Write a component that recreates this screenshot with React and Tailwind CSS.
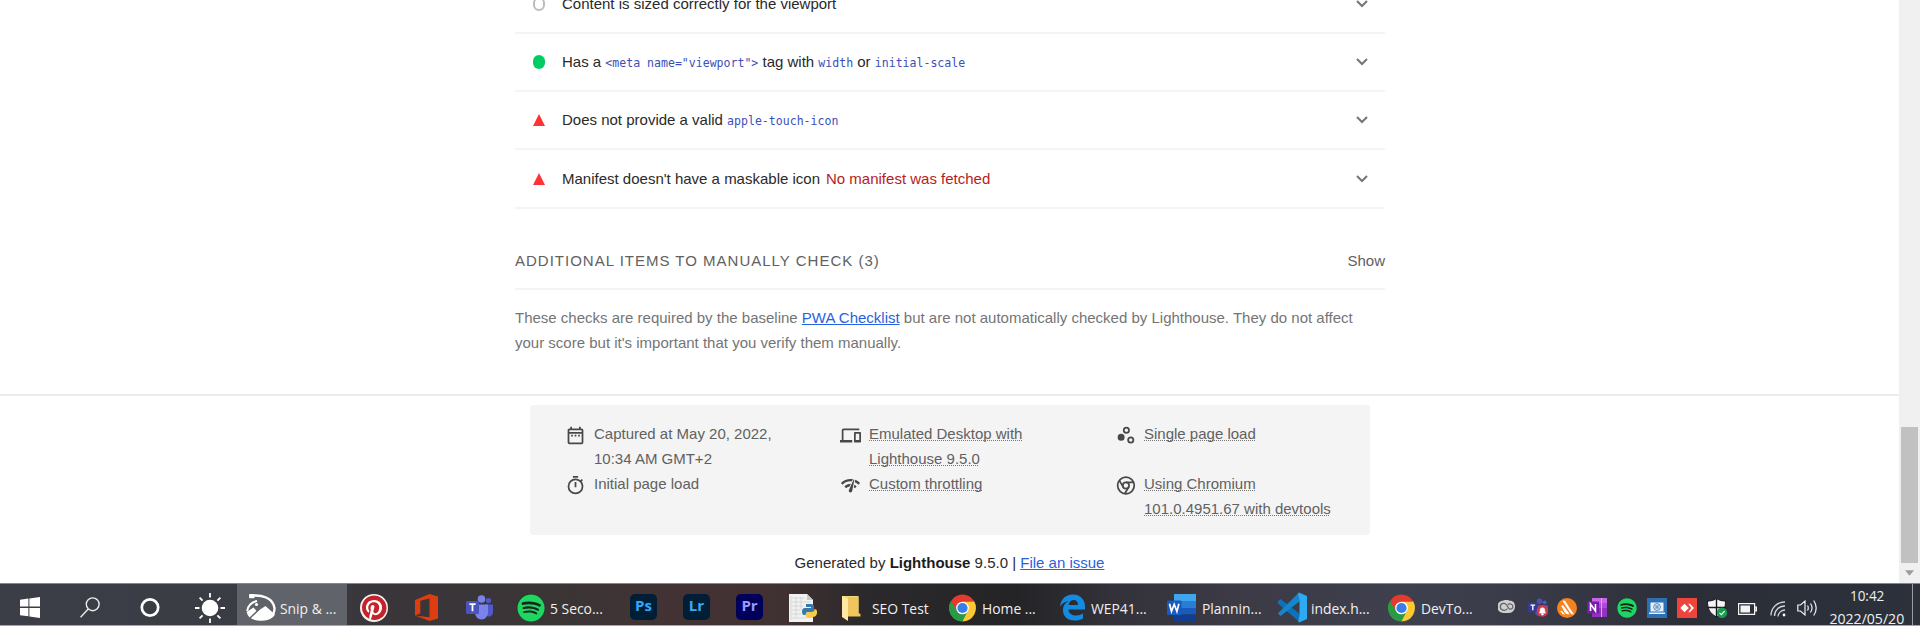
import React from "react";
import { FaPinterest, FaSpotify } from "react-icons/fa";

/* ---------- Report icons ---------- */

const META_PATHS = {
  date: "M7 11h2v2H7v-2zm14-5v14a2 2 0 01-2 2H5a2 2 0 01-2-2V6c0-1.1.9-2 2-2h1V2h2v2h8V2h2v2h1a2 2 0 012 2zM5 8h14V6H5v2zm14 12V10H5v10h14zm-4-7h2v-2h-2v2zm-4 0h2v-2h-2v2z",
  devices: "M4 6h18V4H4a2 2 0 00-2 2v11H0v3h14v-3H4V6zm19 2h-6a1 1 0 00-1 1v10c0 .6.5 1 1 1h6c.6 0 1-.5 1-1V9c0-.6-.5-1-1-1zm-1 9h-4v-7h4v7z",
  samples: "M7 18a4 4 0 110-8 4 4 0 010 8zm11 3a4 4 0 110-8 4 4 0 010 8zm0-6a2 2 0 100 4 2 2 0 000-4zm-5-5a4 4 0 110-8 4 4 0 010 8zm0-6a2 2 0 100 4 2 2 0 000-4z",
  stopwatch: "M15 1H9v2h6V1zm-4 13h2V8h-2v6zm8.03-6.61l1.42-1.42a11 11 0 00-1.41-1.41l-1.42 1.42A9 9 0 0012 4a9 9 0 109 9c0-2.12-.74-4.07-1.97-5.61zM12 20a7 7 0 110-14 7 7 0 010 14z",
  network: "M15.9 5c-.17 0-.32.09-.41.23l-.07.15-5.18 11.65c-.16.29-.26.61-.26.96 0 1.11.9 2.01 2.01 2.01.96 0 1.77-.68 1.96-1.59l.01-.03L16.4 5.5c0-.28-.22-.5-.5-.5zM1 9l2 2c2.88-2.88 6.79-4.08 10.53-3.62l1.19-2.68C9.89 3.84 4.74 5.27 1 9zm20 2l2-2c-1.64-1.64-3.55-2.82-5.59-3.57l-.53 2.82c1.5.62 2.9 1.53 4.12 2.75zm-4 4l2-2c-.8-.8-1.7-1.42-2.66-1.89l-.55 2.92c.42.27.83.59 1.21.97zM5 13l2 2c1.13-1.13 2.56-1.79 4.03-2l1.28-2.88c-2.63-.08-5.3.87-7.31 2.88z",
};

function MetaIcon({ name }) {
  return (
    <svg viewBox="0 0 24 24" className="mt-[4px] h-[21px] w-[21px] shrink-0 fill-[#484848]">
      {name === "chrome" ? (
        <g fill="none" stroke="#484848" strokeWidth="2">
          <circle cx="12.5" cy="12" r="9.5" />
          <circle cx="12.5" cy="12" r="3.6" />
          <path d="M12.5 8.4h9M9.4 13.8L4.9 6.2M15.6 13.8l-4.5 7.6" />
        </g>
      ) : (
        <path d={META_PATHS[name]} />
      )}
    </svg>
  );
}

function Chevron() {
  return (
    <svg viewBox="0 0 12 8" className="mr-[17px] h-[8px] w-[12px]" preserveAspectRatio="none">
      <path d="M1 1l5 5 5-5" fill="none" stroke="#757575" strokeWidth="2" />
    </svg>
  );
}

function Status({ kind }) {
  if (kind === "none") return <span className="h-[14px] w-[12px] rounded-full border-2 border-[#bdbdbd]" />;
  if (kind === "pass") return <span className="h-[14px] w-[12px] rounded-full bg-[#0c6]" />;
  return (
    <svg viewBox="0 0 12 12" preserveAspectRatio="none" className="h-[12px] w-[12px]">
      <path d="M6 0l6 12H0z" fill="#f33" />
    </svg>
  );
}

function Code({ children }) {
  return <code className="font-['DejaVu_Sans_Mono',monospace] text-[11.55px] text-[#3a50b8]">{children}</code>;
}

function AuditRow({ kind, className, children }) {
  return (
    <div className={"flex shrink-0 items-center border-b-2 border-[#f4f4f4] pl-[18px] text-[#2a2a2a] " + className}>
      <Status kind={kind} />
      <div className="ml-[17px] flex-1 whitespace-nowrap">{children}</div>
      <Chevron />
    </div>
  );
}

function Meta({ icon, plain, children }) {
  return (
    <div className="flex h-[50px] items-start">
      <MetaIcon name={icon} />
      <p className="ml-[8px] whitespace-nowrap">
        <span className={plain ? "" : "underline decoration-[#777] decoration-dotted decoration-1 underline-offset-1 [text-decoration-skip-ink:none]"}>{children}</span>
      </p>
    </div>
  );
}

/* ---------- Taskbar ---------- */

function Label({ className, children }) {
  return (
    <span className={"block whitespace-nowrap text-[15px] leading-5 text-[#f0f0f0] " + className}>
      <span className="inline-block origin-left scale-x-[0.925]">{children}</span>
    </span>
  );
}

function Adobe({ text, className }) {
  return (
    <span className={"flex h-[26px] w-[27px] items-center justify-center rounded-[5px] pb-[2px] text-[15px] font-bold leading-none " + className}>
      {text}
    </span>
  );
}

function Chrome({ className }) {
  return (
    <svg viewBox="0 0 28 28" className={"h-[28px] w-[27px] " + className}>
      <path d="M14 14L1.9 7A14 14 0 0126.1 7z" fill="#e33b2e" />
      <path d="M14 14L26.1 7A14 14 0 0114 28z" fill="#fcc934" />
      <path d="M14 14v14A14 14 0 011.9 7z" fill="#2c9a45" />
      <path d="M14 7.6h12.4L20 17.2z" fill="#fcc934" />
      <path d="M1.9 7l6.6 10.2L14 7.6z" fill="#e33b2e" />
      <path d="M1.9 7l6.5 10.3 5.6 3.1 5.5-3.2L14 28A14 14 0 011.9 7z" fill="#2c9a45" />
      <circle cx="14" cy="14" r="6.6" fill="#fff" />
      <circle cx="14" cy="14" r="5.3" fill="#3b7de8" />
    </svg>
  );
}

function Teams({ className, alert }) {
  return (
    <svg viewBox="0 0 27 25" className={className}>
      <circle cx="22.5" cy="5.5" r="2.6" fill="#5059c9" />
      <circle cx="15.5" cy="4" r="3.8" fill={alert ? "#4a50b8" : "#7b83eb"} />
      <path d="M19 9.5h8v8a4 4 0 01-6 3.4z" fill="#5059c9" />
      <path d="M9 9.5h13v8.5a6.5 6.5 0 01-13 0z" fill={alert ? "#4a50b8" : "#7b83eb"} />
      <rect x="0" y="6" width="13" height="13" rx="1.2" fill={alert ? "#343a98" : "#4b53bc"} />
      <path d="M3.4 9.2h6.2M6.5 9.2v7" stroke="#fff" strokeWidth="1.8" />
      {alert && (
        <g>
          <circle cx="19.5" cy="17" r="8" fill="#d13a4e" />
          <path d="M15.5 20c1-1 1-2 1-4a3 3 0 016 0c0 2 0 3 1 4zm3 1h2v1.5h-2z" fill="#fff" stroke="#fff" />
        </g>
      )}
    </svg>
  );
}

function Taskbar() {
  return (
    <footer className="flex h-[43px] shrink-0 items-center border-y border-t-[#85868a] border-b-[#a5a5a8] bg-[linear-gradient(90deg,#3b3e47_0%,#3a3c43_14%,#39363a_20%,#3b3435_30%,#443233_36%,#3f3031_41%,#2b292b_45%,#242326_53%,#33323a_58%,#3b3a45_64%,#3f404e_73%,#383b47_80%,#2b2e37_88%,#2c313b_100%)] pt-[6px] font-['Open_Sans','Noto_Sans',sans-serif]">
      <svg viewBox="0 0 20 21" className="ml-[20px] h-[21px] w-[20px] shrink-0" fill="#fff">
        <path d="M0 2.7L8.4 1.5V9.6H0zM9.4 1.4L20 0v9.6H9.4zM0 11h8.4v8.3L0 18.2zM9.4 11H20v10L9.4 19.5z" />
      </svg>
      <svg viewBox="0 0 20 21" className="ml-[40px] h-[21px] w-[20px] shrink-0" fill="none" stroke="#ececec" strokeWidth="1.4">
        <circle cx="12.7" cy="7.3" r="6.4" />
        <path d="M8.2 12L.6 20.2" />
      </svg>
      <svg viewBox="0 0 20 20" className="ml-[40px] h-[21px] w-[20px] shrink-0">
        <circle cx="10" cy="10" r="8.2" fill="none" stroke="#fff" strokeWidth="2.7" />
      </svg>
      <svg viewBox="0 0 30 30" className="ml-[35px] h-[30px] w-[30px] shrink-0">
        <circle cx="15" cy="15" r="8.3" fill="#fff" />
        <path d="M15 0v4.5M15 25.5V30M0 15h4.5M25.5 15H30M4.6 4.6l3 3M22.4 22.4l3 3M4.6 25.4l3-3M22.4 7.6l3-3" stroke="#fff" strokeWidth="1.8" />
      </svg>

      <div className="-mt-[6px] ml-[12px] flex h-[41px] w-[110px] shrink-0 items-center bg-[#606369] pl-[9px] pt-[6px]">
        <svg viewBox="0 0 30 28" className="h-[28px] w-[30px] shrink-0">
          <path d="M3.500 2C16 0 27 4 28.500 14a13 12 0 01-4 9" fill="none" stroke="#fff" strokeWidth="2.400" />
          <path d="M3.200 0h5.200v4.200H3.200z" fill="#fff" />
          <path d="M11 7A12 11 0 001.200 17" fill="none" stroke="#fff" strokeWidth="2" />
          <circle cx="10.500" cy="10.500" r="1.600" fill="#fff" />
          <path d="M.5 18l7-4.500 3.500 4L19.500 12 29 20.500a14.500 9 0 01-27 1z" fill="#fff" />
          <path d="M4 24l9-8.500" stroke="#606369" strokeWidth="1.500" />
        </svg>
        <Label className="ml-[4px] w-[60px]">Snip &amp; ...</Label>
      </div>

      <span className="ml-[13px] flex h-[28px] w-[28px] shrink-0 items-center justify-center rounded-full bg-[#f4f0f0]">
        <span className="flex h-[25px] w-[25px] items-center justify-center overflow-hidden rounded-full bg-white">
          <FaPinterest className="h-[26px] w-[26px] shrink-0 text-[#c4232b]" />
        </span>
      </span>
      <svg viewBox="0 0 23 27" className="ml-[27px] h-[27px] w-[23px] shrink-0">
        <path d="M0 6L14.500 0 23 2.400V24.600L14.500 27 0 21.500l14.500 1.800V4.500L5.300 6.700V19.500L0 21.500z" fill="#dc3e10" />
      </svg>
      <Teams className="ml-[28px] h-[25px] w-[27px] shrink-0" />
      <span className="ml-[24px] flex h-[27px] w-[27px] shrink-0 items-center justify-center rounded-full bg-[#1a2420]">
        <FaSpotify className="h-[28px] w-[28px] shrink-0 text-[#1ed760]" />
      </span>
      <Label className="ml-[6px] w-[80px]">5 Seco...</Label>
      <div className="mb-[2px] flex shrink-0 gap-[26px]">
        <Adobe text="Ps" className="bg-[#001e36] text-[#31a8ff]" />
        <Adobe text="Lr" className="bg-[#001e36] text-[#41a9ee]" />
        <Adobe text="Pr" className="bg-[#00005b] text-[#9999ff]" />
      </div>
      <svg viewBox="0 0 28 28" className="ml-[26px] h-[28px] w-[28px] shrink-0">
        <path d="M0 0h18l6 6v22H0z" fill="#f1f1f0" />
        <path d="M18 0v6h6z" fill="#c9c9c9" />
        <path d="M3 4h12M3 8h18M3 12h11M3 16h9M3 20h9M3 24h14M2 2v24M7 3v20M12 3v12" stroke="#cfd2d4" strokeWidth=".8" />
        <path d="M17 10h5q3 0 3 3v3q0 2-3 2h-3q-2 0-2 3h-2q-2 0-2-3.500t3-3.500h6v-1h-5z" fill="#3b78aa" />
        <path d="M23.500 24h-4q-3 0-3-3 0-3 3-3h3q3 0 3-3 3 0 2.500 4t-4.500 4z" fill="#f6cd4a" />
      </svg>
      <svg viewBox="0 0 19 27" className="ml-[25px] h-[27px] w-[19px] shrink-0">
        <path d="M0 2h16.500v20H0z" fill="#f5d77e" />
        <path d="M6 3h10.500v16l2 1v2.500H6z" fill="#eec65d" />
        <path d="M0 2l6 3v22l-6-4z" fill="#ffe9a3" />
      </svg>
      <Label className="ml-[11px] w-[77px]">SEO Test</Label>
      <Chrome className="shrink-0" />
      <Label className="ml-[6px] w-[78px]">Home ...</Label>
      <svg viewBox="0 0 25 26" className="h-[27px] w-[25px] shrink-0">
        <path d="M0 12C1 4 6 0 13 0c8 0 12 6 12 12v3H8.500c0 4 4 6 7.500 6 3 0 5-.7 7-1.900V24c-2.500 1.400-5 2-8.500 2C7 26 3 21.500 3 15.500 3 11 5.600 8 8.800 6.500 5 7 2 9 0 12zm8.500-1.500H18C18 7 16 5.500 13.500 5.500S9 7.500 8.500 10.500z" fill="#128be0" />
      </svg>
      <Label className="ml-[6px] w-[76px]">WEP41...</Label>
      <svg viewBox="0 0 29 27" className="h-[27px] w-[29px] shrink-0">
        <path d="M7 0h22v7H7z" fill="#41a5ee" />
        <path d="M7 7h22v7H7z" fill="#2b7cd3" />
        <path d="M7 14h22v6.500H7z" fill="#185abd" />
        <path d="M7 20.500h22V27H7z" fill="#103f91" />
        <rect x="0" y="6.500" width="14.500" height="14.500" rx="1" fill="#185abd" />
        <path d="M2.500 9.800l2 7.700 2.700-7.200 2.700 7.200 2-7.700" fill="none" stroke="#fff" strokeWidth="1.700" />
      </svg>
      <Label className="ml-[6px] w-[75px]">Plannin...</Label>
      <svg viewBox="0 0 30 30" className="h-[31px] w-[30px] shrink-0">
        <path d="M.8 9L3.500 6.500 23 21.500V30L1 11z" fill="#0b72bb" />
        <path d="M.8 21L22 0l1 8.500L3.500 23.500z" fill="#1287d0" />
        <path d="M22 0l8 3.500v23L22 30l-.8-1 1.300-6V7.500L21 1.500z" fill="#2cabf2" />
      </svg>
      <Label className="ml-[4px] w-[77px]">index.h...</Label>
      <Chrome className="shrink-0" />
      <Label className="ml-[6px] w-[77px]">DevTo...</Label>

      {/* System tray */}
      <svg viewBox="0 0 17 13" className="mb-[2px] h-[13px] w-[17px] shrink-0">
        <path d="M5.500.5a6 6 0 016 .3C15 .5 17 3 17 6.500S14.500 13 11 13H5.500A6 6 0 015.500.5z" fill="#cfcfcf" />
        <path d="M9.500 8.500C7.500 11.500 2.300 10.500 2.300 6.700S7 2.300 8.600 5l2 3c1.500 2.300 4.300 1 4.300-1.500S11.500 3 9.600 4.600" fill="none" stroke="#5f6068" strokeWidth="1.200" />
      </svg>
      <Teams alert className="ml-[13px] h-[19px] w-[20px] shrink-0" />
      <svg viewBox="0 0 20 20" className="ml-[9px] h-[20px] w-[20px] shrink-0">
        <circle cx="10" cy="10" r="10" fill="#f6821f" />
        <path d="M5.500 3q2.300-1.200 3.300 1L17 16.500q-2.500.3-4-2zM4.300 8q1-1.500 2.400 0l5.800 8q-3 1-4.800-1.700zM3.200 13.300q.8-1.200 2 0l3 3.200q-2.800.2-5-3.200z" fill="#fff" />
      </svg>
      <svg viewBox="0 0 20 19" className="ml-[10px] h-[19px] w-[20px] shrink-0">
        <path d="M5 0h15v5H5z" fill="#ca64ea" />
        <path d="M5 5h15v5H5z" fill="#ae4bd5" />
        <path d="M5 10h15v9H5z" fill="#9332bf" />
        <path d="M14 0h1v19h-1z" fill="#d9a3ee" />
        <rect y="3.500" width="12" height="12" fill="#7719aa" />
        <path d="M3.500 13V6l5 7V6" fill="none" stroke="#fff" strokeWidth="1.600" />
      </svg>
      <span className="ml-[10px] flex h-[19px] w-[19px] shrink-0 items-center justify-center rounded-full bg-[#1a2420]">
        <FaSpotify className="h-[20px] w-[20px] shrink-0 text-[#1ed760]" />
      </span>
      <svg viewBox="0 0 20 20" className="ml-[11px] h-[20px] w-[20px] shrink-0">
        <path d="M0 0h20v20H0z" fill="#2c6fb4" />
        <path d="M3.500 4.500h13v9h-13zM2 14.500h16v1.500H2z" fill="#e9f1f8" />
        <circle cx="10" cy="9" r="3.400" fill="none" stroke="#2c6fb4" strokeWidth=".8" />
        <path d="M9 7v4M11 7v4M9 9h2" stroke="#2c6fb4" strokeWidth=".8" />
      </svg>
      <svg viewBox="0 0 20 20" className="ml-[10px] h-[20px] w-[20px] shrink-0">
        <path d="M0 0h20v20H0z" fill="#ef443b" />
        <path d="M7.500 5.800l4.300 4.200-4.300 4.200L3.300 10zM11.300 5.800h1.600L17 10l-4.100 4.200h-1.600l3-4.200z" fill="#fff" />
      </svg>
      <svg viewBox="0 0 20 20" className="ml-[10px] h-[20px] w-[20px] shrink-0">
        <path d="M9.500.5c3 2 6 2.500 9 2.500 0 8-2 12-9 16-7-4-9-8-9-16 3 0 6-.5 9-2.500z" fill="#f5f5f5" stroke="#17191f" />
        <path d="M9.500 1v18M.5 9.500h18" stroke="#17191f" strokeWidth="1.400" />
        <circle cx="15" cy="14.700" r="5.200" fill="#1c9a52" />
        <path d="M12.500 14.800l1.900 1.900 3.200-3.600" fill="none" stroke="#fff" strokeWidth="1.200" />
      </svg>
      <svg viewBox="0 0 19 12" className="ml-[11px] mt-[2px] h-[12px] w-[19px] shrink-0">
        <path d="M.6.6h16v10.800H.6zM17 4h1.500v4H17z" fill="none" stroke="#f4f4f4" strokeWidth="1.200" />
        <path d="M2.500 2.500h9.500v7H2.500z" fill="#f4f4f4" />
      </svg>
      <svg viewBox="0 0 16 16" className="ml-[13px] mt-[2px] h-[16px] w-[16px] shrink-0" fill="none" stroke="#cfd1d5" strokeWidth="1.300">
        <path d="M1 14.500A13.500 13.500 0 0115 1M4.500 15A10 10 0 0115 5M8 15.500A7 7 0 0115 9" />
        <circle cx="14" cy="14" r="1.400" fill="#fff" stroke="none" />
      </svg>
      <svg viewBox="0 0 21 18" className="ml-[11px] h-[18px] w-[21px] shrink-0" fill="none" stroke="#f0f0f0" strokeWidth="1.200">
        <path d="M.8 6h2.700L8 2v14l-4.500-4H.8zM10.500 6.500q1.600 2.500 0 5M13.500 4.500q3 4.500 0 9M16.700 1.500q5 7.500 0 15" />
      </svg>
      <div className="-mt-[6px] ml-[10px] flex h-[41px] w-[78px] shrink-0 flex-col items-center self-start whitespace-nowrap text-[15px] leading-[23px] text-[#f0f0f0]">
        <span className="inline-block scale-x-[0.9]">10:42</span>
        <span className="inline-block scale-x-[0.94]">2022/05/20</span>
      </div>
      <span className="-mt-[6px] ml-[6px] h-[41px] w-px shrink-0 bg-[#9a9ca2]" />
    </footer>
  );
}

/* ---------- Page ---------- */

export default function App() {
  return (
    <div className="flex h-[626px] w-[1920px] flex-col overflow-hidden bg-white font-['Liberation_Sans',Arial,sans-serif] text-[15px] leading-[25px]">
      <div className="flex h-[583px] shrink-0">
        <main className="flex w-[1899px] shrink-0 flex-col overflow-hidden">
          <div className="ml-[515px] flex h-[394px] w-[870px] shrink-0 flex-col">
            <AuditRow kind="none" className="-mt-[25px] h-[59px]">Content is sized correctly for the viewport</AuditRow>
            <AuditRow kind="pass" className="h-[58px]">
              Has a <Code>&lt;meta name="viewport"&gt;</Code> tag with <Code>width</Code> or <Code>initial-scale</Code>
            </AuditRow>
            <AuditRow kind="fail" className="h-[58px]">
              Does not provide a valid <Code>apple-touch-icon</Code>
            </AuditRow>
            <AuditRow kind="fail" className="h-[59px]">
              Manifest doesn't have a maskable icon<span className="ml-[6px] text-[#b71c1c]">No manifest was fetched</span>
            </AuditRow>
            <div className="flex h-[81px] shrink-0 items-end justify-between border-b-2 border-[#f4f4f4] pb-[15px] text-[#616161]">
              <h2 className="tracking-[1px]">ADDITIONAL ITEMS TO MANUALLY CHECK (3)</h2>
              <span>Show</span>
            </div>
            <p className="mt-[15px] whitespace-nowrap text-[#757575]">
              These checks are required by the baseline <a className="text-[#2962e0] underline">PWA Checklist</a> but are not automatically checked by Lighthouse. They do not affect
              <br />
              your score but it's important that you verify them manually.
            </p>
          </div>
          <div className="h-[189px] shrink-0 border-t-2 border-[#ececec] pt-[9px]">
            <div className="ml-[530px] grid h-[130px] w-[840px] grid-cols-[275px_275px_255px] content-start rounded-[3px] bg-[#f4f4f4] pl-[35px] pt-[16px] text-[#616161]">
              <Meta icon="date" plain>Captured at May 20, 2022,<br />10:34 AM GMT+2</Meta>
              <Meta icon="devices">Emulated Desktop with<br />Lighthouse 9.5.0</Meta>
              <Meta icon="samples">Single page load</Meta>
              <Meta icon="stopwatch" plain>Initial page load</Meta>
              <Meta icon="network">Custom throttling</Meta>
              <Meta icon="chrome">Using Chromium<br />101.0.4951.67 with devtools</Meta>
            </div>
            <p className="whitespace-nowrap pt-[15px] text-center text-[#2a2a2a]">
              Generated by <b className="text-[#1c1c1c]">Lighthouse</b> 9.5.0 | <a className="text-[#2962e0] underline">File an issue</a>
            </p>
          </div>
        </main>
        <aside className="flex h-[583px] w-[21px] flex-col items-center bg-[#f0f0f0] pt-[427px]">
          <div className="h-[136px] w-[17px] shrink-0 bg-[#c1c1c1]" />
          <svg viewBox="0 0 10 6" className="mt-[7px] h-[6px] w-[9px]">
            <path d="M0 0h10L5 6z" fill="#9c9c9c" />
          </svg>
        </aside>
      </div>
      <Taskbar />
    </div>
  );
}
